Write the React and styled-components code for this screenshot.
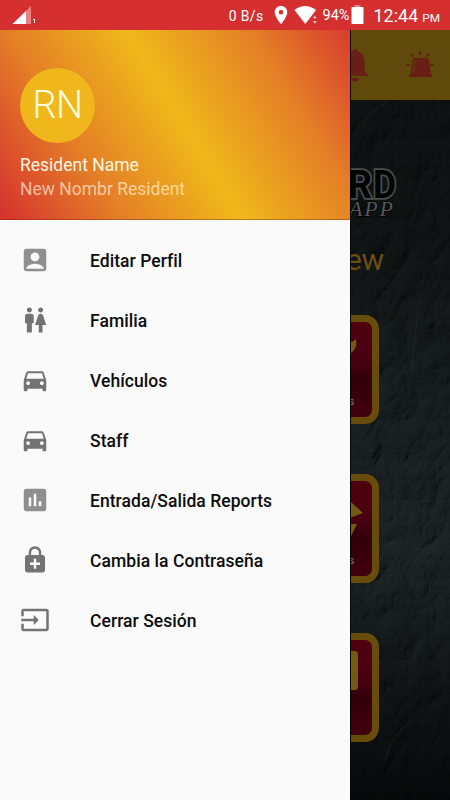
import styled, { createGlobalStyle } from 'styled-components'
import {
  MdAccountBox,
  MdWc,
  MdDirectionsCar,
  MdAssessment,
  MdEnhancedEncryption,
  MdInput,
} from 'react-icons/md'

const GlobalStyle = createGlobalStyle`
  * {
    box-sizing: border-box;
  }
  body {
    margin: 0;
    font-family: Roboto, 'Liberation Sans', sans-serif;
  }
`

const Screen = styled.div`
  width: 450px;
  height: 800px;
  display: grid;
  grid-template-rows: 30px 1fr;
  overflow: hidden;
  background-color: #0a0e0f;
`

const StatusBar = styled.div`
  display: flex;
  align-items: center;
  background-color: #d52f30;
  color: #fff;
  padding: 0 10px 0 12px;
  white-space: nowrap;
`

const StatusText = styled.span`
  font-size: ${({ size }) => size}px;
  line-height: 30px;
  letter-spacing: ${({ spacing }) => spacing || 0}px;
  margin-left: ${({ gap }) => gap || 0}px;
  padding-top: ${({ drop }) => drop || 0}px;
`

const StatusIcon = styled.svg`
  flex: none;
  margin-left: ${({ gap }) => gap || 0}px;
  margin-right: ${({ push }) => (push ? 'auto' : '0')};
`

const Body = styled.div`
  display: grid;
  grid-template-columns: 350px 100px;
  min-height: 0;
`

const Drawer = styled.aside`
  display: flex;
  flex-direction: column;
  background-color: #fafafa;
`

/* the gradient starts under the status bar, hence the -30px offset */
const Header = styled.header`
  height: 190px;
  padding: 37.5px 20px 0;
  background: linear-gradient(
      58.5deg,
      #d5302f,
      #e47e27 25%,
      #efb81a 50%,
      #e47e27 76%,
      #d5302f
    )
    0 -30px / 100% 220px no-repeat;
  border-bottom: 1px solid rgba(120, 20, 0, 0.35);
  background-origin: border-box;
`

const Avatar = styled.div`
  width: 75px;
  height: 75px;
  border-radius: 50%;
  background-color: #efb71b;
  color: #fffde0;
  display: flex;
  align-items: center;
  justify-content: center;
  font-size: 38px;
  font-weight: 300;
  letter-spacing: -0.5px;
`

const Name = styled.div`
  margin-top: 10.5px;
  font-size: 17.5px;
  line-height: 24px;
  color: #fff6e0;
`

const SubName = styled.div`
  font-size: 17.5px;
  line-height: 24px;
  color: rgba(255, 240, 215, 0.7);
`

const Menu = styled.ul`
  list-style: none;
  margin: 0;
  padding: 10px 0 0;
`

const MenuItem = styled.li`
  height: 60px;
  display: grid;
  grid-template-columns: 70px 1fr;
  align-items: center;
  padding-left: 20px;
  color: #0c0c0c;

  svg {
    width: 30px;
    height: 30px;
    color: ${({ light }) => (light ? '#8f8f8f' : '#737373')};
  }
`

const MenuLabel = styled.span`
  padding-top: 2px;
  font-size: 17.5px;
  font-weight: 500;
  letter-spacing: 0.05px;
`

const Page = styled.main`
  display: grid;
  grid-template-rows: 70px 1fr;
  overflow: hidden;
  border-left: 1px solid #050505;
`

const Toolbar = styled.div`
  display: flex;
  background-color: #5f490b;
`

const Wall = styled.div`
  position: relative;
  display: flex;
  flex-direction: column;
  overflow: hidden;
`

const Texture = styled.svg`
  position: absolute;
  inset: 0;
`

const Logo = styled.svg`
  position: relative;
  flex: none;
  margin-top: 60px;
`

const Title = styled.h1`
  position: relative;
  margin: 20px 0 0 -5px;
  font-size: 30px;
  line-height: 40px;
  font-weight: 400;
  letter-spacing: -0.5px;
  color: #6b4f12;
`

const Cards = styled.div`
  position: relative;
  display: flex;
  flex-direction: column;
  gap: 50px;
  margin-top: 35px;
`

const Card = styled.div`
  width: 48px;
  height: 109px;
  margin-left: -20px;
  padding-left: 12px;
  border: 7px solid #684c0b;
  border-radius: 14px;
  background: linear-gradient(#50000f 0%, #460010 45%, #30000a 60%, #42000d);
  display: flex;
  flex-direction: column;
  justify-content: space-between;
`

const CardLabel = styled.span`
  font-size: 10px;
  line-height: 12px;
  color: #8f8082;
  padding-bottom: 9px;
  margin-left: -1px;
`

const menu = [
  { label: 'Editar Perfil', icon: MdAccountBox, light: true },
  { label: 'Familia', icon: MdWc },
  { label: 'Vehículos', icon: MdDirectionsCar },
  { label: 'Staff', icon: MdDirectionsCar },
  { label: 'Entrada/Salida Reports', icon: MdAssessment, light: true },
  { label: 'Cambia la Contraseña', icon: MdEnhancedEncryption },
  { label: 'Cerrar Sesión', icon: MdInput },
]

const cards = [
  { path: 'M0 31 V20 Q3 19 5 17 Q7 26 0 31Z', label: 's' },
  { path: 'M-1 20 L12 32 L-1 37Z M-1 43 L6 43 L-1 57Z', label: 's' },
  { path: 'M-1 11 H4 Q7 11 7 14 V46 Q7 50 4 50 H-1Z' },
]

const TopBar = () => (
  <StatusBar>
    <StatusIcon width="24" height="20" viewBox="0 0 24 20" push="true">
      <path d="M0.500 19 L14 6 V19Z" fill="#fff" />
      <path d="M14 6 L19 1 V19 H14Z" fill="#e98081" />
      <path d="M21 14 h2 v4 h-1 v-3 h-1z" fill="#fff" />
    </StatusIcon>
    <StatusText size={14} spacing={0.35} drop={1}>
      0 B/s
    </StatusText>
    <StatusIcon width="14" height="20" viewBox="0 0 14 20" gap={10}>
      <path
        d="M7 1C3.400 1 0.700 3.700 0.700 7.200 0.700 12 7 19 7 19S13.300 12 13.300 7.200C13.300 3.700 10.600 1 7 1Zm0 8.500a2.300 2.300 0 1 1 0-4.600 2.300 2.300 0 0 1 0 4.600Z"
        fill="#fff"
      />
    </StatusIcon>
    <StatusIcon width="24" height="20" viewBox="0 0 24 20" gap={6}>
      <path d="M0.500 5 Q11 -3 22 5 L11.300 19Z" fill="#fff" />
      <path
        d="M20.800 10.500 l2.300 3 h-4.600z M20.800 19 l2.300-3 h-4.600z"
        fill="#fff"
        stroke="#d52f30"
        strokeWidth=".7"
      />
    </StatusIcon>
    <StatusText size={14.5} gap={5} drop={1}>
      94%
    </StatusText>
    <StatusIcon width="13" height="20" viewBox="0 0 13 20" gap={2}>
      <rect x="3.500" y="0" width="6" height="2" fill="#e98081" />
      <rect x="0.500" y="2" width="12" height="17" rx="0.700" fill="#fff" />
    </StatusIcon>
    <StatusText size={17.800} gap={9} spacing={0.1} drop={1}>
      12:44
    </StatusText>
    <StatusText size={11.800} gap={4} drop={5}>
      PM
    </StatusText>
  </StatusBar>
)

const ToolbarIcons = () => (
  <svg width="99" height="70" viewBox="351 30 99 70" fill="#681f16">
    <path d="M355 49c1.500 0 2.700 1 2.700 2.500 4.800 1.200 6.800 5 6.800 10v7c0 3 1.500 4 3.500 6v1.500h-26V74.500c2-2 3.500-3 3.500-6v-7c0-5 2-8.800 6.800-10 0-1.500 1.200-2.500 2.700-2.500z" />
    <path d="M351 78h8.500q-1.500 3.500-4.500 3.500t-4.500-3.500z" />
    <path d="M413 58h14q1.500 0 2 2l2 14h1v3h-23v-3h1.500l2-14q.5-2 .5-2z" />
    <path d="M417 61.500h-2l-1.800 11" fill="none" stroke="#5f490b" strokeWidth="1" />
    <path
      d="M420 51v4M411.500 53.500l1.800 3M428.500 53.500l-1.800 3M406.500 65h3.500M430.500 65h3.500"
      stroke="#681f16"
      strokeWidth="2"
    />
  </svg>
)

const WallTexture = () => (
  <Texture width="99" height="700">
    <defs>
      <linearGradient id="shade" x1="0" y1="0" x2="0" y2="1">
        <stop offset="0" stopColor="#000" stopOpacity="0.5" />
        <stop offset="0.2" stopColor="#000" stopOpacity="0.45" />
        <stop offset="0.45" stopColor="#000" stopOpacity="0.15" />
        <stop offset="0.65" stopColor="#000" stopOpacity="0" />
        <stop offset="0.8" stopColor="#000" stopOpacity="0.35" />
        <stop offset="1" stopColor="#000" stopOpacity="0.75" />
      </linearGradient>
      <filter id="stone" x="0" y="0" width="100%" height="100%">
        <feTurbulence
          type="turbulence"
          baseFrequency="0.035 0.025"
          numOctaves="6"
          seed="12"
          result="noise"
        />
        <feDiffuseLighting
          in="noise"
          surfaceScale="4"
          lightingColor="#8c9ea2"
          result="light"
        >
          <feDistantLight azimuth="225" elevation="35" />
        </feDiffuseLighting>
      </filter>
    </defs>
    <rect width="99" height="700" fill="#0c1112" />
    <rect width="99" height="700" filter="url(#stone)" opacity="0.17" />
    <rect width="99" height="700" fill="url(#shade)" />
    <g fill="none" stroke="#344044" strokeWidth="0.7" opacity="0.45">
      <path d="M12 24 Q20 9 36 2 M68 210 Q64 230 61 270 M44 283 L55 265" />
      <path d="M24 320 L43 330 M34 660 Q40 634 60 622 M62 560 L70 540" />
    </g>
  </Texture>
)

const App = () => {
  return (
    <>
      <GlobalStyle />
      <Screen>
        <TopBar />
        <Body>
          <Drawer>
            <Header>
              <Avatar>RN</Avatar>
              <Name>Resident Name</Name>
              <SubName>New Nombr Resident</SubName>
            </Header>
            <Menu>
              {menu.map(({ label, icon: Icon, light }) => (
                <MenuItem key={label} light={light ? 1 : 0}>
                  <Icon />
                  <MenuLabel>{label}</MenuLabel>
                </MenuItem>
              ))}
            </Menu>
          </Drawer>
          <Page>
            <Toolbar>
              <ToolbarIcons />
            </Toolbar>
            <Wall>
              <WallTexture />
              <Logo width="99" height="60" viewBox="351 160 99 60">
                <g
                  fontFamily="Roboto"
                  fontWeight="700"
                  fontSize="39"
                  fill="#020303"
                  stroke="#4c4e4f"
                  strokeWidth="3.5"
                  paintOrder="stroke"
                >
                  <text x="348" y="198" textLength="24" lengthAdjust="spacingAndGlyphs">
                    R
                  </text>
                  <text x="373" y="198" textLength="23" lengthAdjust="spacingAndGlyphs">
                    D
                  </text>
                </g>
                <text
                  x="349"
                  y="215.500"
                  fontFamily="Liberation Serif"
                  fontStyle="italic"
                  fontSize="22"
                  textLength="44"
                  fill="#55585a"
                  stroke="#030505"
                  strokeWidth="2"
                  paintOrder="stroke"
                >
                  APP
                </text>
              </Logo>
              <Title>ew</Title>
              <Cards>
                {cards.map((card, i) => (
                  <Card key={i}>
                    <svg width="20" height="60" viewBox="-1 0 20 60" fill="#735911">
                      <path d={card.path} />
                    </svg>
                    {card.label && <CardLabel>{card.label}</CardLabel>}
                  </Card>
                ))}
              </Cards>
            </Wall>
          </Page>
        </Body>
      </Screen>
    </>
  )
}

export default App
